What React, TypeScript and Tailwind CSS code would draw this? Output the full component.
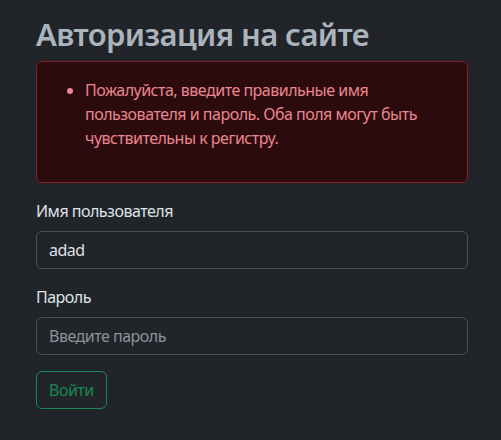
export default function App() {
  return (
    <div className="min-h-[440px] bg-[#212529] px-9 pt-[15px] tracking-[-0.5px] text-[#dee2e6]" style={{ fontFamily: '"Noto Sans", "Open Sans", sans-serif' }}>
      <div className="w-[432px]">
        <h2 className="mb-2 text-[31px] font-semibold leading-[38px] tracking-[-0.6px] text-[#aab4bd]">Авторизация на сайте</h2>

        <div className="mb-4 rounded-md border border-[#842029] bg-[#2c0b0e] p-4 text-[#ea868f]">
          <ul className="mb-4 list-disc pl-8 text-base leading-6">
            <li>Пожалуйста, введите правильные имя пользователя и пароль. Оба поля могут быть чувствительны к регистру.</li>
          </ul>
        </div>

        <form onSubmit={(e) => e.preventDefault()}>
          <div className="mb-4">
            <label className="mb-2 block text-base leading-6">Имя пользователя</label>
            <input
              type="text"
              defaultValue="adad"
              className="block h-[38px] w-full rounded-md border border-[#495057] bg-[#212529] px-3 text-base text-[#dee2e6] outline-none"
            />
          </div>
          <div className="mb-4">
            <label className="mb-2 block text-base leading-6">Пароль</label>
            <input
              type="password"
              placeholder="Введите пароль"
              className="block h-[38px] w-full rounded-md border border-[#495057] bg-[#212529] px-3 text-base text-[#dee2e6] placeholder-[#8b9299] outline-none"
            />
          </div>
          <button type="submit" className="h-[38px] rounded-md border border-[#198754] px-3 text-base text-[#198754]">
            Войти
          </button>
        </form>
      </div>
    </div>
  )
}
